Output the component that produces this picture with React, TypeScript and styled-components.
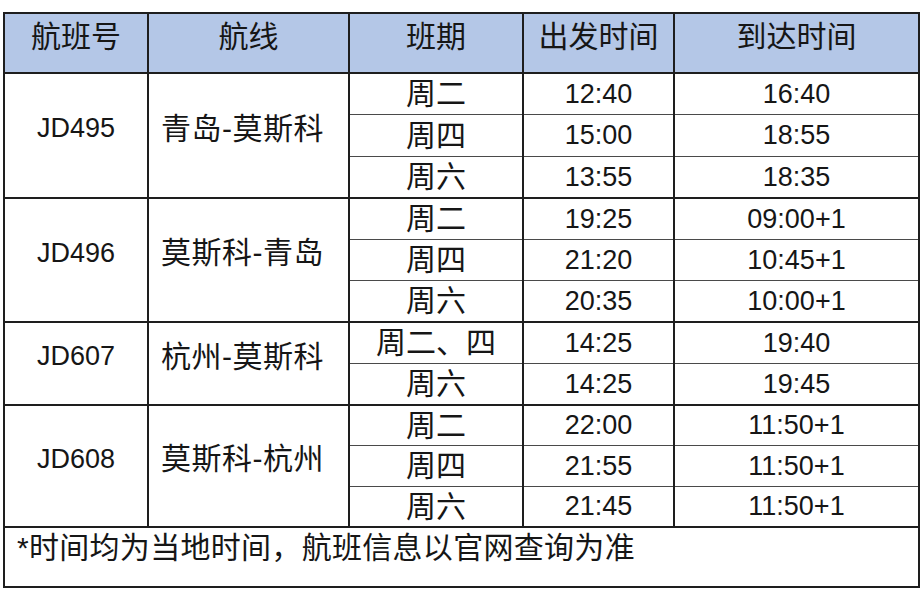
import React from "react";
import styled, { createGlobalStyle } from "styled-components";

const Global = createGlobalStyle`
  html, body { margin: 0; padding: 0; background: #ffffff; }
  body { font-family: "Liberation Sans", "Noto Sans CJK SC", sans-serif; color: #161616; }
`;

const Page = styled.div`
  width: 924px;
  height: 593px;
  padding: 12px 0 0 3px;
  box-sizing: border-box;
  background: #fff;
  overflow: hidden;
`;

const Table = styled.table`
  border-collapse: collapse;
  table-layout: fixed;
  width: 915px;
  border: 2px solid #1e1e1e;
`;

const HeadCell = styled.th`
  background: #b4c7e7;
  height: 46px;
  font-weight: 400;
  font-size: 30px;
  line-height: 1;
  text-align: center;
  vertical-align: middle;
  padding: 0 0 12px 0;
  border: 2px solid #1e1e1e;
`;

const GroupCell = styled.td<{ $cjk?: boolean }>`
  font-size: ${(p) => (p.$cjk ? "30px" : "27px")};
  line-height: 1;
  text-align: center;
  vertical-align: middle;
  padding: 0 ${(p) => (p.$cjk ? "12px" : "0")} 14px 0;
  border: 2px solid #1e1e1e;
  letter-spacing: ${(p) => (p.$cjk ? "0.5px" : "0")};
`;

const Cell = styled.td<{ $cjk?: boolean; $first?: boolean; $h: number }>`
  height: ${(p) => p.$h}px;
  font-size: ${(p) => (p.$cjk ? "30px" : "27px")};
  text-align: center;
  vertical-align: middle;
  padding: 0;
  line-height: 1;
  border-left: 2px solid #1e1e1e;
  border-right: 2px solid #1e1e1e;
  border-top: ${(p) => (p.$first ? "2px solid #1e1e1e" : "1px solid #4a4a4a")};
  border-bottom: 1px solid #4a4a4a;
`;

const NoteCell = styled.td`
  height: 56px;
  font-size: 30px;
  line-height: 1.2;
  text-align: left;
  vertical-align: top;
  padding: 2px 0 0 12px;
  border: 2px solid #1e1e1e;
  letter-spacing: 0.3px;
`;

type Slot = { day: string; dep: string; arr: string };
type Flight = { no: string; route: string; slots: Slot[]; heights: number[] };

const flights: Flight[] = [
  {
    no: "JD495",
    route: "青岛-莫斯科",
    heights: [40, 41, 40],
    slots: [
      { day: "周二", dep: "12:40", arr: "16:40" },
      { day: "周四", dep: "15:00", arr: "18:55" },
      { day: "周六", dep: "13:55", arr: "18:35" },
    ],
  },
  {
    no: "JD496",
    route: "莫斯科-青岛",
    heights: [40, 40, 40],
    slots: [
      { day: "周二", dep: "19:25", arr: "09:00+1" },
      { day: "周四", dep: "21:20", arr: "10:45+1" },
      { day: "周六", dep: "20:35", arr: "10:00+1" },
    ],
  },
  {
    no: "JD607",
    route: "杭州-莫斯科",
    heights: [40, 40],
    slots: [
      { day: "周二、四", dep: "14:25", arr: "19:40" },
      { day: "周六", dep: "14:25", arr: "19:45" },
    ],
  },
  {
    no: "JD608",
    route: "莫斯科-杭州",
    heights: [39, 40, 39],
    slots: [
      { day: "周二", dep: "22:00", arr: "11:50+1" },
      { day: "周四", dep: "21:55", arr: "11:50+1" },
      { day: "周六", dep: "21:45", arr: "11:50+1" },
    ],
  },
];

export default function App() {
  return (
    <Page>
      <Global />
      <Table>
        <colgroup>
          <col style={{ width: 144 }} />
          <col style={{ width: 201 }} />
          <col style={{ width: 174 }} />
          <col style={{ width: 151 }} />
          <col style={{ width: 245 }} />
        </colgroup>
        <thead>
          <tr>
            <HeadCell>航班号</HeadCell>
            <HeadCell>航线</HeadCell>
            <HeadCell>班期</HeadCell>
            <HeadCell>出发时间</HeadCell>
            <HeadCell>到达时间</HeadCell>
          </tr>
        </thead>
        <tbody>
          {flights.map((f) =>
            f.slots.map((s, i) => (
              <tr key={f.no + i}>
                {i === 0 && (
                  <>
                    <GroupCell rowSpan={f.slots.length}>{f.no}</GroupCell>
                    <GroupCell rowSpan={f.slots.length} $cjk>
                      {f.route}
                    </GroupCell>
                  </>
                )}
                <Cell $cjk $first={i === 0} $h={f.heights[i]}>
                  {s.day}
                </Cell>
                <Cell $first={i === 0} $h={f.heights[i]}>
                  {s.dep}
                </Cell>
                <Cell $first={i === 0} $h={f.heights[i]}>
                  {s.arr}
                </Cell>
              </tr>
            ))
          )}
          <tr>
            <NoteCell colSpan={5}>*时间均为当地时间，航班信息以官网查询为准</NoteCell>
          </tr>
        </tbody>
      </Table>
    </Page>
  );
}
